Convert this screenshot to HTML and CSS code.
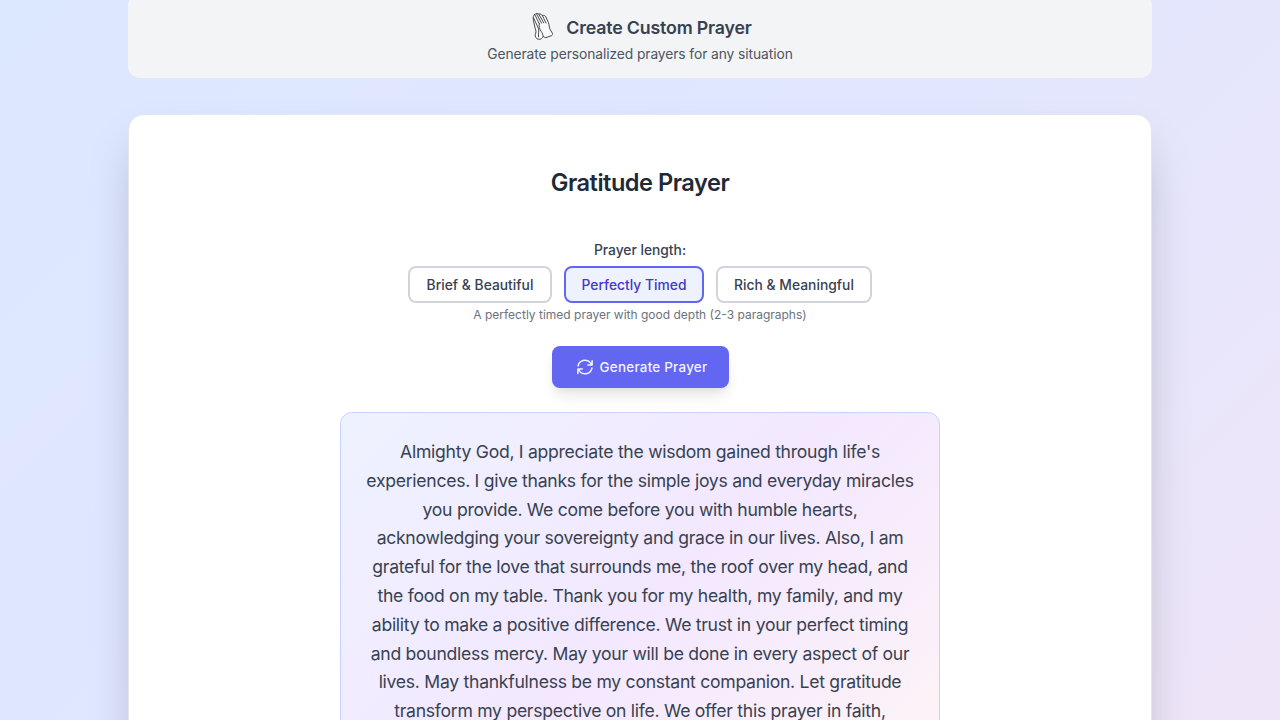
FILE: index.html
```html
<!DOCTYPE html>
<html lang="en">
<head>
<meta charset="utf-8">
<title>Gratitude Prayer</title>
<link rel="stylesheet" href="styles.css">
</head>
<body>
<main class="page">
  <section class="custom">
    <div class="custom-head">
      <svg class="hands" viewBox="0 0 24 30" fill="none" stroke="#30343b" stroke-width=".9" stroke-linecap="round" stroke-linejoin="round">
        <path fill="#fafafa" d="M4.3 8C3.9 5.5 4.4 3 5.8 2.6C6.6 1.2 8.6 1 9.8 2.2C11 1.4 12.6 2.2 13.4 3.6C14.6 2.8 16.2 3.6 16.9 5L19.4 10.5C20.2 13 20.1 15.5 21.2 17.6L23.6 21.6C23.9 22.6 23.4 23.2 22.6 23.6L17 25.6C15.9 25.8 15.2 24.8 14.2 24.3C13.6 26 12 27.6 9.6 27.3C7 26.8 5.9 24.8 6.3 22.6C7.4 20.4 7 18.6 6.2 16.4Z"/>
        <path d="M5.8 2.6L10.3 11.8M7.6 2L12.6 11.2M9.8 2.2L14.8 10.8M13.4 3.6L17 11M4.7 6.2L9.4 16.2C10.2 18.6 9.2 21.6 9.5 24.8M10.3 11.8C9.6 14.2 10.6 17 12.2 19.4C13.4 21 13.8 22.6 14.2 24.3"/>
      </svg>
      <span class="custom-title">Create Custom Prayer</span>
    </div>
    <p class="custom-sub">Generate personalized prayers for any situation</p>
  </section>
  <section class="card">
    <h1 class="title">Gratitude Prayer</h1>
    <p class="label">Prayer length:</p>
    <div class="options">
      <button class="option">Brief &amp; Beautiful</button>
      <button class="option option-active">Perfectly Timed</button>
      <button class="option option-long">Rich &amp; Meaningful</button>
    </div>
    <p class="hint">A perfectly timed prayer with good depth (2-3 paragraphs)</p>
    <button class="generate">
      <svg class="refresh" viewBox="0 0 24 24" fill="none" stroke="currentColor" stroke-width="2" stroke-linecap="round" stroke-linejoin="round">
        <path d="M21.5 3.5v5.8h-5.8M2.5 20.5v-5.8h5.8M2.7 10.6A9.4 9.4 0 0 1 18.7 5.8L21.5 9.3M21.3 13.4A9.4 9.4 0 0 1 5.3 18.2L2.5 14.7"/>
      </svg>
      <span>Generate Prayer</span>
    </button>
    <div class="prayer">
      <p class="prayer-text">Almighty God, I appreciate the wisdom gained through life's<br>
      experiences. I give thanks for the simple joys and everyday miracles<br>
      you provide. We come before you with humble hearts,<br>
      acknowledging your sovereignty and grace in our lives. Also, I am<br>
      grateful for the love that surrounds me, the roof over my head, and<br>
      the food on my table. Thank you for my health, my family, and my<br>
      ability to make a positive difference. We trust in your perfect timing<br>
      and boundless mercy. May your will be done in every aspect of our<br>
      lives. May thankfulness be my constant companion. Let gratitude<br>
      transform my perspective on life. We offer this prayer in faith,</p>
    </div>
  </section>
</main>
</body>
</html>
```
FILE: styles.css
```css
* { box-sizing: border-box; }
html, body { height: 100%; }
body {
  margin: 0;
  overflow: hidden;
  font-family: Inter, "Liberation Sans", sans-serif;
  color: #374151;
  background: linear-gradient(135deg, #dce8ff 0%, #e0e7ff 45%, #efe5f8 100%);
}
p, h1 { margin: 0; }
.page {
  width: 1024px;
  height: 720px;
  margin: 0 auto;
  display: flex;
  flex-direction: column;
  gap: 36px;
}
.custom {
  flex: none;
  height: 84px;
  margin-top: -6px;
  padding-top: 18px;
  border-radius: 12px;
  background: #f3f4f6;
  text-align: center;
}
.custom-head {
  height: 30px;
  display: flex;
  justify-content: center;
  align-items: center;
  gap: 13px;
}
.hands { width: 24px; height: 30px; margin-left: 1px; }
.custom-title {
  padding-top: 2px;
  font-size: 17.8px;
  line-height: 28px;
  font-weight: 600;
  letter-spacing: -.17px;
}
.custom-sub {
  margin-top: 2px;
  font-size: 13.8px;
  line-height: 20px;
  letter-spacing: -.08px;
  color: #4b5563;
}
.card {
  flex: none;
  height: 800px;
  display: flex;
  flex-direction: column;
  align-items: center;
  padding-top: 52px;
  background: #fff;
  border: 1px solid #e5e7eb;
  border-radius: 16px;
  box-shadow: 0 25px 50px -12px rgba(0, 0, 0, .25);
}
.title {
  font-size: 23.6px;
  line-height: 32px;
  font-weight: 600;
  letter-spacing: -.5px;
  color: #1f2937;
}
.label { margin-top: 41px; font-size: 13.8px; line-height: 20px; font-weight: 500; letter-spacing: 0; }
.options { display: flex; gap: 12px; margin-top: 6px; }
.option {
  width: 144px;
  height: 37px;
  padding: 0;
  border: 2px solid #d1d5db;
  border-radius: 8px;
  background: #fff;
  color: #374151;
  font: 500 13.8px/20px Inter, "Liberation Sans", sans-serif;
  letter-spacing: .03px;
}
.option-active { width: 140px; border-color: #6366f1; background: #eef2ff; color: #4338ca; }
.option-long { width: 156px; }
.hint { margin-top: 4px; font-size: 12px; line-height: 16px; color: #6b7280; }
.generate {
  flex: none;
  display: flex;
  justify-content: center;
  align-items: center;
  gap: 6px;
  width: 177px;
  height: 42px;
  margin-top: 23px;
  padding: 0 0 0 3px;
  border: 0;
  border-radius: 8px;
  background: #6366f1;
  color: #f3f4f6;
  font: 500 13.4px/20px Inter, "Liberation Sans", sans-serif;
  letter-spacing: .26px;
  box-shadow: 0 10px 15px -3px rgba(0, 0, 0, .1), 0 4px 6px -2px rgba(0, 0, 0, .05);
}
.refresh { width: 18px; height: 18px; }
.prayer {
  flex: none;
  width: 600px;
  height: 400px;
  margin-top: 24px;
  padding-top: 25px;
  border: 1px solid #c7d2fe;
  border-radius: 12px;
  background: linear-gradient(135deg, #eef2ff 0%, #f3e8ff 50%, #fff5f5 100%);
  text-align: center;
}
.prayer-text { font-size: 17.6px; line-height: 28.8px; letter-spacing: -.28px; white-space: nowrap; }
```
